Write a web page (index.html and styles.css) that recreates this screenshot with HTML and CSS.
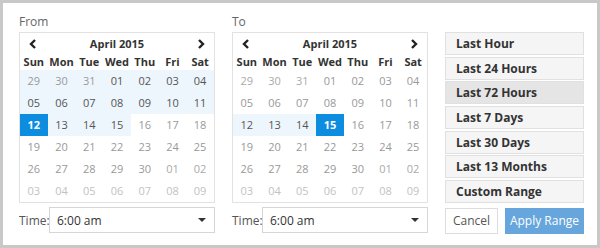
FILE: index.html
```html
<!DOCTYPE html>
<html>
<head>
<meta charset="utf-8">
<link rel="stylesheet" href="styles.css">
</head>
<body>
<div class="panel">
  <div class="col">
    <div class="label">From</div>
    <div class="cal">
      <div class="head">
        <svg class="arr" width="8" height="10" viewBox="0 0 8 10"><path d="M6 1 L2 5 L6 9" fill="none" stroke="#222" stroke-width="2.4"/></svg>
        <span class="month">April 2015</span>
        <svg class="arr" width="8" height="10" viewBox="0 0 8 10"><path d="M2 1 L6 5 L2 9" fill="none" stroke="#222" stroke-width="2.4"/></svg>
      </div>
      <div class="grid dow"><span>Sun</span><span>Mon</span><span>Tue</span><span>Wed</span><span>Thu</span><span>Fri</span><span>Sat</span></div>
      <div class="grid days">
        <span class="in off">29</span><span class="in off">30</span><span class="in off">31</span><span class="in">01</span><span class="in">02</span><span class="in">03</span><span class="in">04</span>
        <span class="in">05</span><span class="in">06</span><span class="in">07</span><span class="in">08</span><span class="in">09</span><span class="in">10</span><span class="in">11</span>
        <span class="sel">12</span><span class="in">13</span><span class="in">14</span><span class="in">15</span><span>16</span><span>17</span><span>18</span>
        <span>19</span><span>20</span><span>21</span><span>22</span><span>23</span><span>24</span><span>25</span>
        <span>26</span><span>27</span><span>28</span><span>29</span><span>30</span><span class="off">01</span><span class="off">02</span>
        <span class="off2">03</span><span class="off2">04</span><span class="off2">05</span><span class="off2">06</span><span class="off2">07</span><span class="off2">08</span><span class="off2">09</span>
      </div>
    </div>
    <div class="time"><span class="tl">Time:</span><div class="select"><span>6:00 am</span><span class="caret"></span></div></div>
  </div>
  <div class="col">
    <div class="label">To</div>
    <div class="cal">
      <div class="head">
        <svg class="arr" width="8" height="10" viewBox="0 0 8 10"><path d="M6 1 L2 5 L6 9" fill="none" stroke="#222" stroke-width="2.4"/></svg>
        <span class="month">April 2015</span>
        <svg class="arr" width="8" height="10" viewBox="0 0 8 10"><path d="M2 1 L6 5 L2 9" fill="none" stroke="#222" stroke-width="2.4"/></svg>
      </div>
      <div class="grid dow"><span>Sun</span><span>Mon</span><span>Tue</span><span>Wed</span><span>Thu</span><span>Fri</span><span>Sat</span></div>
      <div class="grid days">
        <span class="off">29</span><span class="off">30</span><span class="off">31</span><span>01</span><span>02</span><span>03</span><span>04</span>
        <span>05</span><span>06</span><span>07</span><span>08</span><span>09</span><span>10</span><span>11</span>
        <span class="in">12</span><span class="in">13</span><span class="in">14</span><span class="sel">15</span><span>16</span><span>17</span><span>18</span>
        <span>19</span><span>20</span><span>21</span><span>22</span><span>23</span><span>24</span><span>25</span>
        <span>26</span><span>27</span><span>28</span><span>29</span><span>30</span><span class="off">01</span><span class="off">02</span>
        <span class="off2">03</span><span class="off2">04</span><span class="off2">05</span><span class="off2">06</span><span class="off2">07</span><span class="off2">08</span><span class="off2">09</span>
      </div>
    </div>
    <div class="time"><span class="tl">Time:</span><div class="select"><span>6:00 am</span><span class="caret"></span></div></div>
  </div>
  <div class="ranges">
    <div class="rbtn">Last Hour</div>
    <div class="rbtn">Last 24 Hours</div>
    <div class="rbtn active">Last 72 Hours</div>
    <div class="rbtn">Last 7 Days</div>
    <div class="rbtn">Last 30 Days</div>
    <div class="rbtn">Last 13 Months</div>
    <div class="rbtn">Custom Range</div>
    <div class="actions">
      <div class="btn cancel">Cancel</div>
      <div class="btn apply">Apply Range</div>
    </div>
  </div>
</div>
</body>
</html>
```
FILE: styles.css
```css
* { box-sizing: border-box; }
html, body { margin: 0; padding: 0; }
body {
  width: 600px;
  height: 248px;
  font-family: "Open Sans", "Liberation Sans", sans-serif;
  background: #fff;
}
.panel {
  width: 600px;
  height: 248px;
  border: 3px solid #c8c8c8;
  display: flex;
  padding: 0 13px 0 16px;
  gap: 17px;
}
.col {
  width: 196px;
  display: flex;
  flex-direction: column;
}
.label {
  height: 29px;
  padding-top: 11px;
  font-size: 12px;
  line-height: 16px;
  color: #666;
}
.cal {
  border: 1px solid #e2e2e2;
  height: 171px;
}
.head {
  height: 21px;
  display: flex;
  align-items: center;
  justify-content: space-between;
  padding: 0 9px 0 9px;
}
.month {
  font-size: 11px;
  font-weight: 700;
  color: #333;
}
.arr { display: block; }
.grid {
  display: grid;
  grid-template-columns: repeat(7, 1fr);
}
.dow {
  height: 16px;
  font-size: 11px;
  font-weight: 700;
  color: #333;
  text-align: center;
  line-height: 16px;
}
.days span {
  height: 22px;
  line-height: 22px;
  text-align: center;
  font-size: 11px;
  color: #999;
}
.days span.in {
  background: #eef6fd;
  color: #555;
}
.days span.in.off { color: #999; }
.days span.off { color: #aaa; }
.days span.off2 { color: #c2c2c2; }
.days span.sel {
  background: #0c8de0;
  color: #fff;
  font-weight: 700;
}
.time {
  display: flex;
  align-items: center;
  margin-top: 4px;
}
.tl {
  width: 30px;
  font-size: 12px;
  color: #555;
}
.select {
  flex: 1;
  height: 26px;
  border: 1px solid #d6d6d6;
  display: flex;
  align-items: center;
  justify-content: space-between;
  padding: 0 8px 0 7px;
  font-size: 12px;
  color: #333;
}
.caret {
  width: 0;
  height: 0;
  border-left: 4px solid transparent;
  border-right: 4px solid transparent;
  border-top: 4px solid #333;
}
.ranges {
  width: 139px;
  padding-top: 29px;
  display: flex;
  flex-direction: column;
}
.rbtn {
  height: 23px;
  margin-bottom: 1.67px;
  background: #f5f5f5;
  border: 1px solid #e0e0e0;
  font-size: 12px;
  font-weight: 700;
  color: #333;
  line-height: 21px;
  padding-left: 10px;
}
.rbtn.active { background: #e5e5e5; }
.actions {
  display: flex;
  justify-content: space-between;
  margin-top: 3px;
}
.btn {
  height: 26px;
  line-height: 24px;
  font-size: 12px;
  text-align: center;
  border: 1px solid #ddd;
}
.cancel {
  width: 53px;
  background: #fff;
  color: #555;
}
.apply {
  width: 79px;
  background: #66a6dd;
  border-color: #66a6dd;
  color: #fff;
}
```
